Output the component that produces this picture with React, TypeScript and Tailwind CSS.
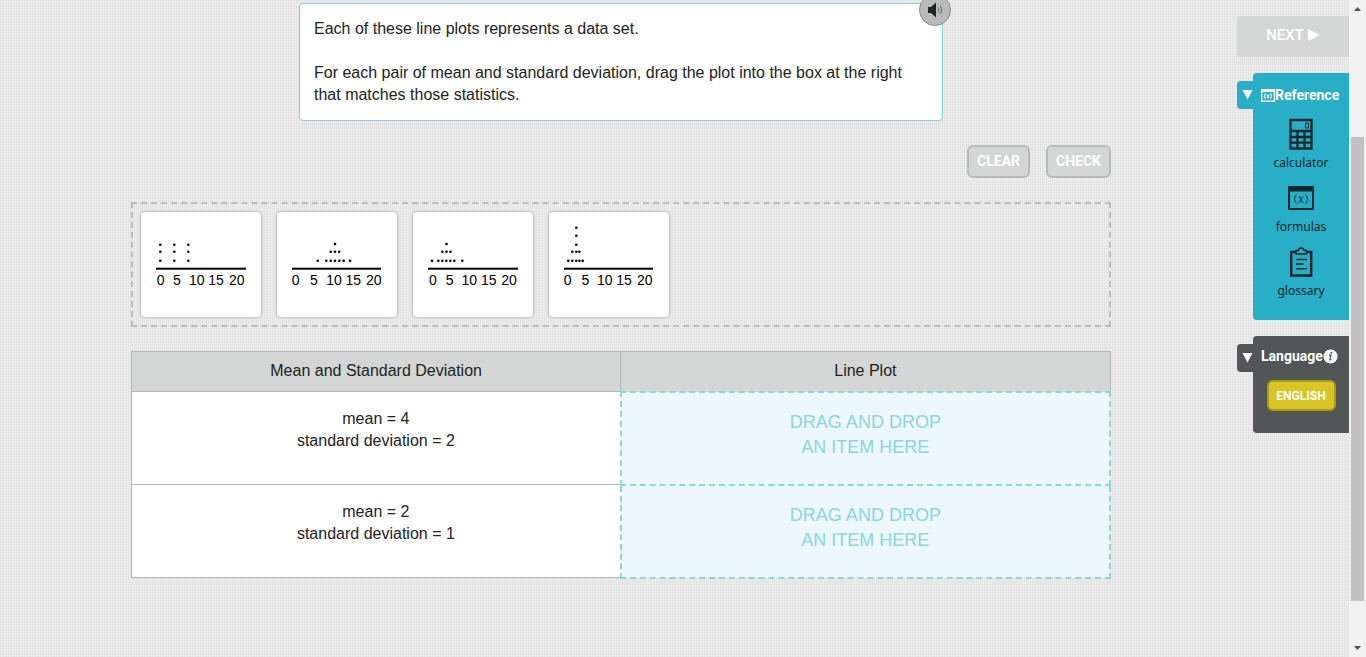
import type { ReactNode } from "react";

type Plot = {
    id: string,
    axis: [number, number],
    labels: number[],
    dots: [number, number[]][]
}

type Row = {
    mean: number,
    deviation: number
}

const ticks = [0, 5, 10, 15, 20]

// every entry in dots is one row: the y value, then the x values
const plots: Plot[] = [
    {
        id: "a",
        axis: [15, 105],
        labels: [19.7, 36, 55.7, 75, 95.7],
        dots: [
            [32.7, [19.3, 33.3, 47.3]],
            [39.7, [19.3, 33.3, 47.3]],
            [48.7, [19.3, 33.3, 47.3]],
        ]
    },
    {
        id: "b",
        axis: [15, 104],
        labels: [18.7, 37, 57, 76.3, 96.7],
        dots: [
            [32, [58]],
            [39.7, [53.7, 58, 62.2]],
            [48.7, [40.7, 49.3, 53.7, 58, 62.3, 66.7, 73]],
        ]
    },
    {
        id: "c",
        axis: [15, 105],
        labels: [20, 36.7, 56.3, 75.7, 96],
        dots: [
            [32, [33.5]],
            [39.7, [29.3, 33.5, 37.5]],
            [48.7, [19, 25.3, 29.3, 33.3, 37.3, 41.3, 49.3]],
        ]
    },
    {
        id: "d",
        axis: [15, 104],
        labels: [18.7, 36.3, 55.7, 75, 95.7],
        dots: [
            [15.7, [27.3]],
            [23.7, [27.3]],
            [32.7, [27.3]],
            [39.7, [23.3, 27.3, 30.3]],
            [48.7, [19.3, 23.3, 27.3, 30.5, 33.7]],
        ]
    },
]

const rows: Row[] = [
    { mean: 4, deviation: 2 },
    { mean: 2, deviation: 1 },
]

function LinePlot({ plot }: { plot: Plot }) {
    return (
        <svg viewBox="0 0 120 105" className="block h-[105px] w-[120px]">
            {plot.dots.map(([y, xs]) => xs.map((x) => (
                <circle key={`${x}-${y}`} cx={x} cy={y} r="1.3" />
            )))}
            <rect x={plot.axis[0]} y="55.7" width={plot.axis[1] - plot.axis[0]} height="2" />
            {ticks.map((tick, index) => (
                <text
                    key={tick}
                    x={plot.labels[index]}
                    y="73"
                    textAnchor="middle"
                    className="text-[14px]">
                    {tick}
                </text>
            ))}
        </svg>
    )
}

function CalculatorIcon() {
    return (
        <svg width="24" height="32" viewBox="0 0 24 32" fill="none">
            <path d="M1.500 2h21v28.500h-21zM1.500 13h21M1.500 19h21M1.500 24.700h21M8.500 13v17M15.500 13v17" stroke="#12282d" strokeWidth="2.300" />
            <path d="M16.500 5h3v5h-3z" stroke="#12282d" strokeWidth="1" />
        </svg>
    )
}

function FormulasIcon({ small }: { small?: boolean }) {
    return (
        <svg
            viewBox="0 0 26 24"
            fill="none"
            stroke="currentColor"
            className={small ? "h-[13px] w-[14px]" : "h-6 w-[26px]"}>
            <path d="M1 1h24v22H1z" strokeWidth={small ? 3 : 2} />
            <path d="M0 3h26" strokeWidth="5" />
            <path d="M8.600 8.500c-2.600 2.600-2.600 6.700 0 9.300M17.400 8.500c2.600 2.600 2.600 6.700 0 9.300" strokeWidth={small ? 2 : 1} />
            <path d="M10.500 11c1.500-1 2 0 2.500 2.500s1 3.500 2.500 2.500M15.600 10.700c-2 0-3.200 5.800-5.200 5.600" strokeWidth={small ? 2 : 1} />
        </svg>
    )
}

function GlossaryIcon() {
    return (
        <svg width="24" height="32" viewBox="0 0 24 32" fill="none" stroke="#12282d">
            <path d="M7 6H2.200v23.500h20V6H17" strokeWidth="2.400" />
            <path d="M7 8V4.500h2.500C9.500 1 15 1 15 4.500h2.500V8z" strokeWidth="1.500" strokeLinejoin="round" />
            <path d="M7 13.500h11M7 18h7.500M7 22.800h11" strokeWidth="1.500" />
        </svg>
    )
}

function TabButton({ label, color }: { label: string, color: string }) {
    return (
        <button
            type="button"
            aria-label={label}
            className={`mt-2 flex h-7 w-4 shrink-0 items-center justify-end rounded-l-sm ${color}`}>
            <svg width="11" height="10" viewBox="0 0 11 10" className="text-white">
                <path d="M0.500 0h10L5.500 9.500z" fill="currentColor" />
            </svg>
        </button>
    )
}

function Tool({ name, children }: { name: string, children: ReactNode }) {
    return (
        <button type="button" className="flex w-full flex-col items-center text-[#12282d]">
            <span className="flex h-8 items-center">{children}</span>
            <span className="mt-[5px] font-['Noto_Sans',sans-serif] text-[12px] leading-4">{name}</span>
        </button>
    )
}

function Sidebar() {
    return (
        <aside className="w-28 shrink-0 pt-4 font-[Roboto,sans-serif]">
            <button
                type="button"
                className="flex h-[41px] w-full items-center justify-center gap-1 rounded-l-sm bg-[#d4d6d5] pb-1 text-[15px] font-medium text-white">
                NEXT
                <svg width="12" height="12" viewBox="0 0 12 12">
                    <path d="M0 0l12 6-12 6z" fill="currentColor" />
                </svg>
            </button>

            <section className="mt-4 flex items-start">
                <TabButton label="Toggle reference" color="bg-[#29aec7]" />
                <div className="flex-1 rounded-l-sm bg-[#29aec7] pt-3 pb-[21px]">
                    <h2 className="flex items-center pl-2 text-[14px] leading-5 font-bold text-white">
                        <FormulasIcon small />
                        Reference
                    </h2>
                    <div className="mt-[13px] flex flex-col gap-[11px]">
                        <Tool name="calculator"><CalculatorIcon /></Tool>
                        <Tool name="formulas"><FormulasIcon /></Tool>
                        <Tool name="glossary"><GlossaryIcon /></Tool>
                    </div>
                </div>
            </section>

            <section className="mt-4 flex items-start">
                <TabButton label="Toggle language" color="bg-[#525656]" />
                <div className="flex-1 rounded-l-sm bg-[#525656] pt-[10px] pb-[22px]">
                    <h2 className="flex items-center pl-2 text-[14px] leading-5 font-bold text-white">
                        Language
                        <svg width="15" height="15" viewBox="0 0 15 15">
                            <circle cx="7.500" cy="7.500" r="7" fill="white" />
                            <path d="M6 6.300l2-.5-1.200 4.700c0 .8.800.4 1.500-.2" fill="none" stroke="#525656" strokeWidth="1.200" />
                            <circle cx="8.400" cy="3.700" r="1" fill="#525656" />
                        </svg>
                    </h2>
                    <button
                        type="button"
                        className="mx-auto mt-[14px] block h-[31px] w-[69px] rounded-md border-2 border-[#a89c10] bg-[#d9c526] text-[12px] leading-4 font-bold text-white">
                        ENGLISH
                    </button>
                </div>
            </section>
        </aside>
    )
}

function ScrollTrack() {
    return (
        <div className="sticky top-0 flex h-screen w-[17px] shrink-0 flex-col items-center bg-[#f1f1f1]">
            <svg width="17" height="17" viewBox="0 0 17 17">
                <path d="M5 11h7L8.500 7z" fill="#505050" />
            </svg>
            <div className="grow-[120]" />
            <div className="w-[13px] grow-[464] bg-[#c1c1c1]" />
            <div className="grow-[39]" />
            <svg width="17" height="17" viewBox="0 0 17 17">
                <path d="M5 6h7l-3.500 4z" fill="#505050" />
            </svg>
        </div>
    )
}

export default function App() {
    const actionButton = "h-[33px] rounded-md border-2 border-[#b9bbba] bg-[#d4d6d5] px-2 pb-[2px] font-[Roboto,sans-serif] text-[14px] font-bold text-white"

    return (
        <div className="flex min-h-screen bg-[#eeeeee] bg-[repeating-linear-gradient(90deg,#00000008_0px_1px,transparent_1px_2px),repeating-linear-gradient(0deg,#00000006_0px_1px,transparent_1px_2px)] font-['Liberation_Sans',Arial,sans-serif] text-[16px] leading-[22px] text-[#222]">
            <main className="min-w-0 flex-1 pl-[5px]">
                <div className="mx-auto w-full max-w-[980px] pt-[3px]">
                    <div className="relative mx-auto max-w-[644px] rounded-sm border border-[#7fd0da] bg-white p-[14px]">
                        <p>Each of these line plots represents a data set.</p>
                        <p className="mt-[22px]">
                            For each pair of mean and standard deviation, drag the plot into the box at the right that matches those statistics.
                        </p>
                        <button
                            type="button"
                            aria-label="Listen"
                            className="absolute -top-[10px] -right-[9px] flex size-8 items-center justify-center rounded-full border border-[#8a8c8b] bg-[#b9bbba]">
                            <svg width="18" height="16" viewBox="0 0 18 16" fill="none">
                                <path d="M2 5h3l5-4.500v15L5 11H2z" fill="#222" />
                                <path d="M12 5.500c1 1.500 1 3.500 0 5M14.200 4c1.800 2.500 1.800 5.500 0 8" stroke="#5d6a70" strokeWidth="1" />
                            </svg>
                        </button>
                    </div>

                    <div className="mt-6 flex justify-end gap-4">
                        <button type="button" className={actionButton}>CLEAR</button>
                        <button type="button" className={actionButton}>CHECK</button>
                    </div>

                    <div className="mt-6 flex flex-wrap gap-4 border-2 border-dashed border-[#bbbdbc] p-2">
                        {plots.map((plot) => (
                            <div
                                key={plot.id}
                                draggable
                                className="cursor-move rounded-sm bg-white text-black shadow-[0_0_3px_#00000066]">
                                <LinePlot plot={plot} />
                            </div>
                        ))}
                    </div>

                    <table className="mt-6 w-full table-fixed border-collapse text-center">
                        <thead>
                            <tr className="h-10 bg-[#d4d6d5]">
                                <th className="border border-[#b3b8b8] pt-2 align-top font-normal">Mean and Standard Deviation</th>
                                <th className="border border-[#b3b8b8] pt-2 align-top font-normal">Line Plot</th>
                            </tr>
                        </thead>
                        <tbody>
                            {rows.map((row) => (
                                <tr key={row.mean} className="h-[93px]">
                                    <td className="border border-[#b3b8b8] bg-white pt-4 align-top">
                                        mean = {row.mean}<br />
                                        standard deviation = {row.deviation}
                                    </td>
                                    <td className="border-2 border-dashed border-[#8bd5db] bg-[#ecf8fb] pt-[17px] align-top text-[18px] leading-[25px] text-[#8bd5db]">
                                        DRAG AND DROP<br />
                                        AN ITEM HERE
                                    </td>
                                </tr>
                            ))}
                        </tbody>
                    </table>
                </div>
            </main>
            <Sidebar />
            <ScrollTrack />
        </div>
    )
}
